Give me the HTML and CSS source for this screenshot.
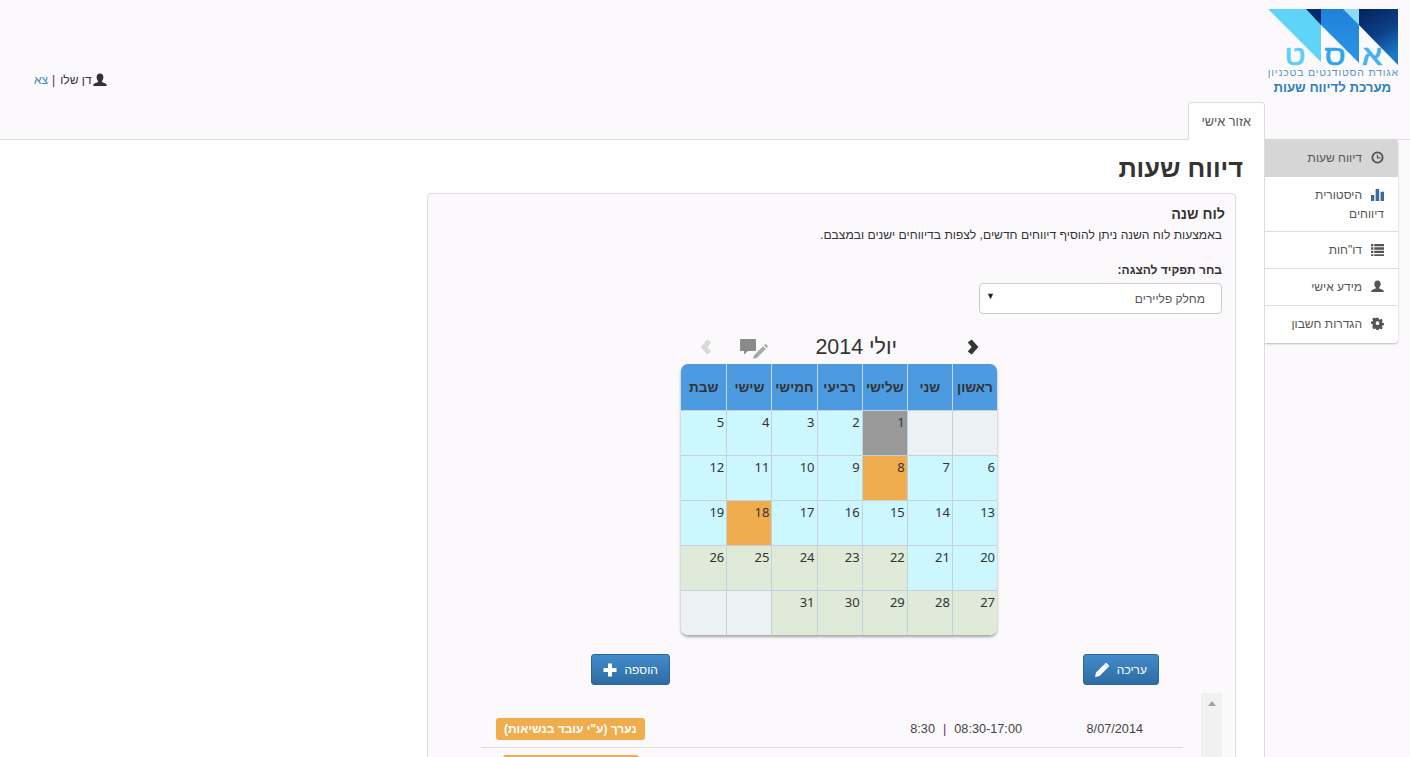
FILE: index.html
```html
<!DOCTYPE html>
<html lang="he" dir="rtl">
<head>
<meta charset="utf-8">
<title>דיווח שעות</title>
<link rel="stylesheet" href="styles.css">
</head>
<body>
<header class="top">
  <div class="top-row">
    <div class="logo">
      <svg class="logo-art" width="131" height="58" viewBox="0 0 131 58">
        <defs>
          <linearGradient id="navy" x1="0" y1="0" x2="0.4" y2="1">
            <stop offset="0" stop-color="#04205c"/><stop offset="0.55" stop-color="#0c3f86"/><stop offset="1" stop-color="#1a78c8"/>
          </linearGradient>
          <linearGradient id="mid" x1="0" y1="0" x2="0" y2="1">
            <stop offset="0" stop-color="#1f82d8"/><stop offset="1" stop-color="#2a95e6"/>
          </linearGradient>
        </defs>
        <polygon points="0,0 53,0 53,53" fill="#5fd3f8"/>
        <polygon points="38,0 53,0 53,16" fill="#05296b"/>
        <polygon points="53,0 91,0 91,54 53,16" fill="url(#mid)"/>
        <polygon points="75,0 91,0 91,16" fill="#8ddcf7"/>
        <polygon points="91,0 130,0 130,56 91,16" fill="url(#navy)"/>
        <text class="logo-l l-a" transform="translate(104 56) scale(1.15 1)">א</text>
        <text class="logo-l l-s" transform="translate(67 56) scale(1.15 1)">ס</text>
        <text class="logo-l l-t" transform="translate(27 56) scale(1.15 1)">ט</text>
      </svg>
      <div class="logo-sub">אגודת הסטודנטים בטכניון</div>
      <div class="logo-title">מערכת לדיווח שעות</div>
    </div>
    <div class="user">
      <svg class="ic user-ic" viewBox="0 0 14 14"><path d="M7 .5c2.200 0 3.400 1.600 3.400 3.700 0 1.500-.6 2.900-1.500 3.700v1.200l3.600 1.500c.8.300 1.200.9 1.200 1.700V13H.3v-.7c0-.8.400-1.400 1.200-1.700l3.600-1.500V7.900C4.200 7.100 3.600 5.700 3.600 4.200 3.600 2.100 4.800.5 7 .5z"/></svg>
      <span>דן שלו</span><span class="sep">|</span><a class="exit" href="#">צא</a>
    </div>
  </div>
  <nav class="tabs"><a class="tab" href="#">אזור אישי</a></nav>
</header>

<div class="main">
  <aside class="side">
    <ul class="menu">
      <li class="item active"><svg class="ic" viewBox="0 0 14 14"><path fill-rule="evenodd" d="M7 .5a6.500 6.500 0 1 1 0 13 6.500 6.500 0 0 1 0-13zm0 2a4.500 4.500 0 1 0 0 9 4.500 4.500 0 0 0 0-9zM6.300 4h1.300v2.700h2.400V8H6.300z"/></svg>דיווח שעות</li>
      <li class="item tall"><svg class="ic chart" viewBox="0 0 14 14"><path d="M0 7.500h3.500V14H0zM5 1h3.800v13H5zM10.300 4H14v10h-3.700z"/></svg>היסטורית דיווחים</li>
      <li class="item"><svg class="ic" viewBox="0 0 14 14"><path d="M0 1h2.500v2.500H0zM3.500 1H14v2.500H3.500zM0 4.700h2.500v2.500H0zM3.500 4.700H14v2.500H3.500zM0 8.400h2.500v2.500H0zM3.500 8.400H14v2.500H3.500zM0 12h2.500v2H0zM3.500 12H14v2H3.500z"/></svg>דו"חות</li>
      <li class="item"><svg class="ic" viewBox="0 0 14 14"><path d="M7 .5c2.200 0 3.400 1.600 3.400 3.700 0 1.500-.6 2.900-1.500 3.700v1.200l3.600 1.500c.8.300 1.200.9 1.200 1.700V13H.3v-.7c0-.8.400-1.400 1.200-1.700l3.600-1.500V7.900C4.200 7.100 3.600 5.700 3.600 4.200 3.600 2.100 4.800.5 7 .5z"/></svg>מידע אישי</li>
      <li class="item"><svg class="ic" viewBox="0 0 14 14"><path fill-rule="evenodd" d="M5.700.5h2.600l.4 1.900 1.100.5 1.700-1 1.800 1.800-1 1.700.5 1.100 1.900.4v2.600l-1.900.4-.5 1.100 1 1.700-1.800 1.800-1.700-1-1.100.5-.4 1.900H5.700l-.4-1.900-1.100-.5-1.700 1L.7 11l1-1.700-.5-1.100L-.7 7.800V5.200l1.900-.4.500-1.100-1-1.700L2.500.2l1.700 1 1.100-.5zM7 4.800a2.200 2.200 0 1 0 0 4.400 2.200 2.200 0 0 0 0-4.400z" transform="translate(.7 .3) scale(.9)"/></svg>הגדרות חשבון</li>
    </ul>
  </aside>

  <main class="content">
    <h1 class="page-title">דיווח שעות</h1>
    <section class="panel">
      <h2 class="panel-title">לוח שנה</h2>
      <div class="panel-body">
        <p class="desc">באמצעות לוח השנה ניתן להוסיף דיווחים חדשים, לצפות בדיווחים ישנים ובמצבם.</p>
        <div class="field-label">בחר תפקיד להצגה:</div>
        <div class="select"><span>מחלק פליירים</span><span class="arrow">▼</span></div>

        <div class="cal-wrap">
          <div class="cal-head">
            <svg class="chev" viewBox="0 0 14 18"><path d="M9 .5 1.500 9 9 17.500 13.500 14 9 9 13.500 4Z" transform="matrix(-1 0 0 1 14 0)" fill="#333"/></svg>
            <div class="cal-month">יולי 2014</div>
            <svg class="cal-note" viewBox="0 0 28 22"><path d="M1 1h14a1 1 0 0 1 1 1v10a1 1 0 0 1-1 1H8l-4 3.500V13H1a1 1 0 0 1-1-1V2a1 1 0 0 1 1-1z" fill="#8a8a8a"/><path d="M13 21l1-3.800 9-9 2.800 2.800-9 9zM24 7.200l1-1a.8.8 0 0 1 1.100 0l1.600 1.600a.8.8 0 0 1 0 1.100l-1 1z" fill="#a8a8a8"/></svg>
            <svg class="chev" viewBox="0 0 14 18"><path d="M9 .5 1.500 9 9 17.500 13.500 14 9 9 13.500 4Z" fill="#d9d9d9"/></svg>
          </div>
          <div class="cal">
            <div class="dow">ראשון</div><div class="dow">שני</div><div class="dow">שלישי</div><div class="dow">רביעי</div><div class="dow">חמישי</div><div class="dow">שישי</div><div class="dow">שבת</div>
            <div class="d none"></div><div class="d none"></div><div class="d grey">1</div><div class="d new">2</div><div class="d new">3</div><div class="d new">4</div><div class="d new">5</div>
            <div class="d new">6</div><div class="d new">7</div><div class="d edit">8</div><div class="d new">9</div><div class="d new">10</div><div class="d new">11</div><div class="d new">12</div>
            <div class="d new">13</div><div class="d new">14</div><div class="d new">15</div><div class="d new">16</div><div class="d new">17</div><div class="d edit">18</div><div class="d new">19</div>
            <div class="d new">20</div><div class="d new">21</div><div class="d ok">22</div><div class="d ok">23</div><div class="d ok">24</div><div class="d ok">25</div><div class="d ok">26</div>
            <div class="d ok">27</div><div class="d ok">28</div><div class="d ok">29</div><div class="d ok">30</div><div class="d ok">31</div><div class="d none"></div><div class="d none"></div>
          </div>
        </div>

        <div class="actions">
          <button class="btn"><span>עריכה</span><svg class="btn-ic" viewBox="0 0 14 14"><path d="M0 14l1-4.500L9.500 1l3.500 3.500L4.500 13zM10.300.3a1 1 0 0 1 1.400 0l2 2a1 1 0 0 1 0 1.400l-.6.500L9.700.8z" fill="#fff"/></svg></button>
          <button class="btn"><span>הוספה</span><svg class="btn-ic" viewBox="0 0 14 14"><path d="M5 .5h4v4.500h4.500v4H9v4.500H5V9H.5V5H5z" fill="#fff"/></svg></button>
        </div>

        <div class="list-wrap">
          <div class="list">
            <div class="row">
              <span class="r-date">8/07/2014</span>
              <span class="r-hours"><span>08:30-17:00</span><span class="bar">|</span><span>8:30</span></span>
              <span class="label">נערך (ע"י עובד בנשיאות)</span>
            </div>
            <div class="row">
              <span class="label second"></span>
            </div>
          </div>
          <div class="scroll"><span class="scroll-up"></span></div>
        </div>
      </div>
    </section>
  </main>
</div>
</body>
</html>
```

FILE: styles.css
```css
* { box-sizing: border-box; }
html, body { margin: 0; height: 757px; overflow: hidden; }
body {
  background: #fbf9fb;
  color: #333;
  font-family: "Liberation Sans", Arial, sans-serif;
  font-size: 12px;
  line-height: 19px;
}
.top { height: 140px; border-bottom: 1px solid #ddd; display: flex; flex-direction: column; }
.top-row { display: flex; flex: none; justify-content: space-between; height: 102px; padding: 9px 11px 0 34px; }
.logo { width: 131px; }
.logo-art { display: block; overflow: visible; }
.logo-l { font-family: "Liberation Sans", Arial, sans-serif; font-size: 28px; stroke-width: .7px; text-anchor: middle; }
.l-a { fill: #43b2ee; stroke: #43b2ee; }
.l-s { fill: #2fa6e8; stroke: #2fa6e8; }
.l-t { fill: #5ccff7; stroke: #5ccff7; }
.logo-sub { font-size: 10.5px; line-height: 12px; margin-top: -1px; letter-spacing: .8px; color: #5b96bd; white-space: nowrap; }
.logo-title { font-size: 13.2px; font-weight: bold; line-height: 18px; margin-top: 1px; color: #2f80bd; padding-right: 8px; white-space: nowrap; }
.user { display: flex; align-items: center; height: 19px; margin-top: 62px; color: #333; }
.ic { width: 13px; height: 13px; fill: #444; flex: none; }
.user-ic { width: 14px; height: 14px; margin: -2px 0 0 1px; fill: #333; }
.sep { margin: 0 5px 0 4px; color: #5a2a6a; }
.exit { color: #428bca; text-decoration: none; }
.tabs { display: flex; flex: none; padding-right: 145px; height: 38px; }
.tab {
  display: block; height: 38px; padding: 10px 13px 0;
  background: #fff; border: 1px solid #ddd; border-bottom: 0; border-radius: 4px 4px 0 0;
  color: #555; text-decoration: none; font-size: 12.7px;
}
.main { display: flex; height: 617px; }
.side { width: 145px; flex: none; margin-top: -1px; }
.menu {
  list-style: none; margin: 0 12px 0 0; padding: 0; background: #fff; width: 133px;
  border-radius: 0 4px 4px 0; box-shadow: 0 1px 2px rgba(0,0,0,.25);
}
.item { height: 37px; padding: 9px 14px 8px 15px; color: #555; border-bottom: 1px solid #ddd; }
.item:last-child { border-bottom: 0; }
.item .ic { display: inline-block; vertical-align: -2px; margin-left: 9px; fill: #555; }
.item .chart { fill: #3d6a9a; }
.item.active { background: #d6d6d6; height: 38px; padding-top: 10px; border-bottom: 0; border-radius: 0 4px 0 0; }
.item.tall { height: 55px; }
.content { flex: 1; background: #fff; box-shadow: inset -1px 0 0 #ddd; padding-top: 13px; }
.page-title { margin: 0; padding-right: 22px; font-size: 25.4px; line-height: 30px; font-weight: bold; color: #333; }
.panel {
  width: 809px; margin: 10px 29px 0 0; height: 600px;
  background: #fbf9fb; border: 1px solid #ddd; border-radius: 4px 4px 0 0;
  padding: 12px 10px 0;
}
.panel-title { margin: 0; font-size: 14.3px; line-height: 16px; font-weight: bold; color: #333; }
.panel-body { padding: 0 3px; }
.desc { margin: 4px 0 0; font-size: 12.1px; line-height: 18px; color: #333; }
.field-label { margin-top: 17px; font-size: 12px; font-weight: bold; line-height: 18px; }
.select {
  display: flex; justify-content: space-between; align-items: center;
  width: 243px; height: 31px; margin-top: 4px; padding: 1px 16px 0 6px;
  background: #fff; border: 1px solid #ccc; border-radius: 4px; color: #555; font-size: 12px;
}
.arrow { font-size: 9px; color: #222; margin-top: -5px; }
.cal-wrap { width: 316px; margin: 17px 225px 0 0; }
.cal-head { display: flex; align-items: center; height: 32px; }
.chev { width: 13px; height: 16px; flex: none; }
.cal-head > .chev:first-child { margin-right: 17px; }
.cal-month { font-size: 21.4px; line-height: 32px; color: #333; margin-right: 70px; white-space: nowrap; }
.cal-note { width: 28px; height: 22px; flex: none; margin-right: 47px; margin-top: 3px; }
.cal-head > .chev:last-child { margin-right: 28px; }
.cal {
  display: grid; grid-template-columns: repeat(7, 45.14px); grid-template-rows: 46px repeat(5, 45px);
  width: 316px; margin-top: 1px; border-radius: 7px; overflow: hidden;
  box-shadow: 0 2px 3px rgba(0,0,0,.35);
}
.dow {
  display: flex; align-items: center; justify-content: center;
  background: #4c9ae0; color: #333; font-weight: bold; font-size: 13.5px;
  border-left: 1px solid #c9d6e6;
}
.dow:nth-child(7n) { border-left: 0; }
.d {
  padding: 2px 2px 0 0; font-family: "Noto Sans", "Liberation Sans", sans-serif; font-size: 13px; line-height: 18px;
  border-left: 1px solid #c4d0dc; border-top: 1px solid #c4d0dc; color: #333;
}
.d:nth-child(7n) { border-left: 0; }
.new { background: #ccf7ff; }
.none { background: #ecf1f4; }
.grey { background: #999; }
.edit { background: #f0ad4e; }
.ok { background: #e0ead8; }
.actions { display: flex; justify-content: space-between; margin: 19px 63px 0 0; width: 568px; }
.btn {
  display: flex; align-items: center; gap: 7.5px; height: 31px; padding: 0 11px;
  background: linear-gradient(#428bca, #2d6ca2); border: 1px solid #2b669a; border-radius: 3px;
  color: #fff; font: 12px "Liberation Sans", Arial, sans-serif;
}
.btn-ic { width: 14px; height: 14px; flex: none; }
.list-wrap { display: flex; margin-top: 8px; height: 70px; }
.scroll { width: 21px; flex: none; background: #f1f1f1; order: -1; display: flex; justify-content: center; padding-top: 8px; }
.scroll-up { width: 0; height: 0; border: 4px solid transparent; border-top: 0; border-bottom: 5px solid #a3a3a3; }
.list { width: 702px; margin-right: 18px; padding-top: 18px; }
.row { display: flex; align-items: flex-start; height: 37px; padding-top: 7px; border-bottom: 1px solid #ddd; font-size: 12.7px; line-height: 22px; color: #444; }
.row:last-child { border-bottom: 0; }
.r-date { margin-right: 40px; width: 57px; white-space: nowrap; }
.r-hours { display: flex; margin-right: 64px; white-space: nowrap; }
.bar { margin: 0 8px; color: #7a2a7a; }
.label {
  margin-right: auto; margin-left: 15px; padding: 0 8px; height: 22px; line-height: 22px;
  background: #f0ad4e; border-radius: 3px; color: #fff; font-weight: bold; font-size: 12px; white-space: nowrap;
}
.label.second { width: 136px; margin-left: 22px; }
```
